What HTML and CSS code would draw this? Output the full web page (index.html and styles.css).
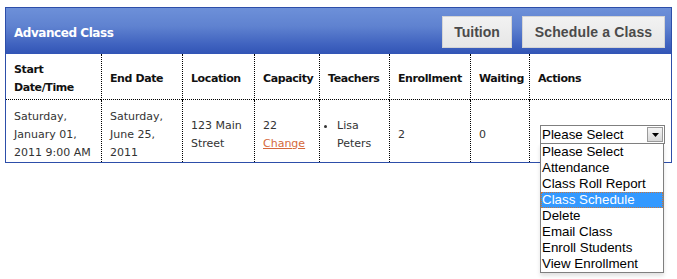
FILE: index.html
```html
<!DOCTYPE html>
<html>
<head>
<meta charset="utf-8">
<link rel="stylesheet" href="styles.css">
</head>
<body>
<div class="panel">
  <div class="panel-head">
    <h2 class="panel-title">Advanced Class</h2>
    <div class="head-actions">
      <button class="btn btn-tuition">Tuition</button>
      <button class="btn btn-schedule">Schedule a Class</button>
    </div>
  </div>
  <table class="grid">
    <thead>
      <tr>
        <th class="c1">Start<br>Date/Time</th>
        <th class="c2">End Date</th>
        <th class="c3">Location</th>
        <th class="c4">Capacity</th>
        <th class="c5">Teachers</th>
        <th class="c6">Enrollment</th>
        <th class="c7">Waiting</th>
        <th class="c8">Actions</th>
      </tr>
    </thead>
    <tbody>
      <tr>
        <td>Saturday,<br>January 01,<br>2011 9:00 AM</td>
        <td>Saturday,<br>June 25,<br>2011</td>
        <td>123 Main<br>Street</td>
        <td>22<br><a class="change" href="#">Change</a></td>
        <td><ul class="teachers"><li>Lisa Peters</li></ul></td>
        <td>2</td>
        <td>0</td>
        <td class="act">
          <div class="fake-select">
            <div class="fs-box">
              <span class="fs-value">Please Select</span>
              <span class="fs-arrow"><svg width="7" height="4" viewBox="0 0 7 4"><path d="M0 0h7L3.5 4z" fill="#000"/></svg></span>
            </div>
            <ul class="fs-list">
              <li>Please Select</li>
              <li>Attendance</li>
              <li>Class Roll Report</li>
              <li class="sel">Class Schedule</li>
              <li>Delete</li>
              <li>Email Class</li>
              <li>Enroll Students</li>
              <li>View Enrollment</li>
            </ul>
          </div>
        </td>
      </tr>
    </tbody>
  </table>
</div>
</body>
</html>
```
FILE: styles.css
```css
html, body {
  margin: 0;
  padding: 0;
  background: #fff;
}
html {
  height: 100%;
}
body {
  min-height: 279px;
  box-sizing: border-box;
  padding: 7px 0 0 5px;
  font-family: "DejaVu Sans", Verdana, sans-serif;
  font-size: 11px;
}
.panel {
  width: 667px;
  box-sizing: border-box;
  border: 1px solid #2d4ea9;
}
.panel-head {
  height: 46px;
  display: flex;
  align-items: center;
  justify-content: space-between;
  padding: 0 6px 0 8px;
  background: linear-gradient(to bottom, #6d90d9 0%, #5f82d0 40%, #3f62bf 80%, #3154b5 100%);
}
.panel-title {
  margin: 0;
  color: #fff;
  font-family: "DejaVu Sans", Verdana, sans-serif;
  font-size: 12px;
  font-weight: bold;
  letter-spacing: -0.45px;
  padding-top: 3px;
}
.head-actions {
  display: flex;
  gap: 10px;
  padding-top: 1px;
}
.btn {
  height: 32px;
  box-sizing: border-box;
  border: 1px solid #d4d4d4;
  background: linear-gradient(to bottom, #f2f2f2, #e6e6e6);
  color: #4a4a4a;
  font-family: "Liberation Sans", Arial, sans-serif;
  font-size: 14px;
  font-weight: bold;
  padding: 1px 0 0 0;
  text-align: center;
}
.btn-tuition { width: 70px; }
.btn-schedule { width: 143px; letter-spacing: 0.15px; }

.grid {
  border-collapse: separate;
  border-spacing: 0;
  table-layout: fixed;
  width: 665px;
}
.grid th, .grid td {
  box-sizing: border-box;
  text-align: left;
  line-height: 18px;
  border-left: 1px dotted #000;
  vertical-align: middle;
}
.grid th:first-child, .grid td:first-child {
  border-left: none;
}
.grid th {
  color: #111;
  font-weight: bold;
  letter-spacing: -0.4px;
  padding: 7px 8px 2px 8px;
  border-bottom: 1px dotted #000;
}
.grid td {
  color: #333;
  padding: 8px 8px 0 8px;
}
.c1 { width: 95px; }
.c2 { width: 81px; }
.c3 { width: 72px; }
.c4 { width: 65px; }
.c5 { width: 70px; }
.c6 { width: 81px; }
.c7 { width: 59px; }
.c8 { width: 142px; }

.change {
  color: #d5683b;
  text-decoration: underline;
}
.teachers {
  margin: 0;
  padding: 0 0 0 9px;
}
.teachers li {
  list-style: disc outside;
}
.grid td.act {
  vertical-align: top;
  padding: 25px 0 0 10px;
}
.fake-select {
  position: relative;
  width: 125px;
  font-family: "Liberation Sans", Arial, sans-serif;
  font-size: 13.333px;
  color: #000;
}
.fs-box {
  height: 19px;
  box-sizing: border-box;
  border: 1px solid #7f7f7f;
  background: #fff;
  display: flex;
  align-items: center;
  justify-content: space-between;
  line-height: 16px;
}
.fs-value {
  padding-left: 1px;
}
.fs-arrow {
  width: 16px;
  height: 15px;
  margin-right: 1px;
  box-sizing: border-box;
  border: 1px solid #9a9a9a;
  background: linear-gradient(to bottom, #f4f4f4, #d8d8d8);
  display: flex;
  align-items: center;
  justify-content: center;
}
.fs-list {
  position: absolute;
  z-index: 5;
  top: 18px;
  left: 0;
  width: 124px;
  box-sizing: border-box;
  margin: 0;
  padding: 0;
  list-style: none;
  border: 1px solid #7f7f7f;
  background: #fff;
  box-shadow: 0 3px 4px rgba(0,0,0,0.12);
}
.fs-list li {
  height: 16px;
  line-height: 16px;
  padding-left: 1px;
  white-space: nowrap;
}
.fs-list li.sel {
  background: #3399ff;
  color: #fff;
  outline: 1px dotted #c8763c;
  outline-offset: -1px;
}
```
